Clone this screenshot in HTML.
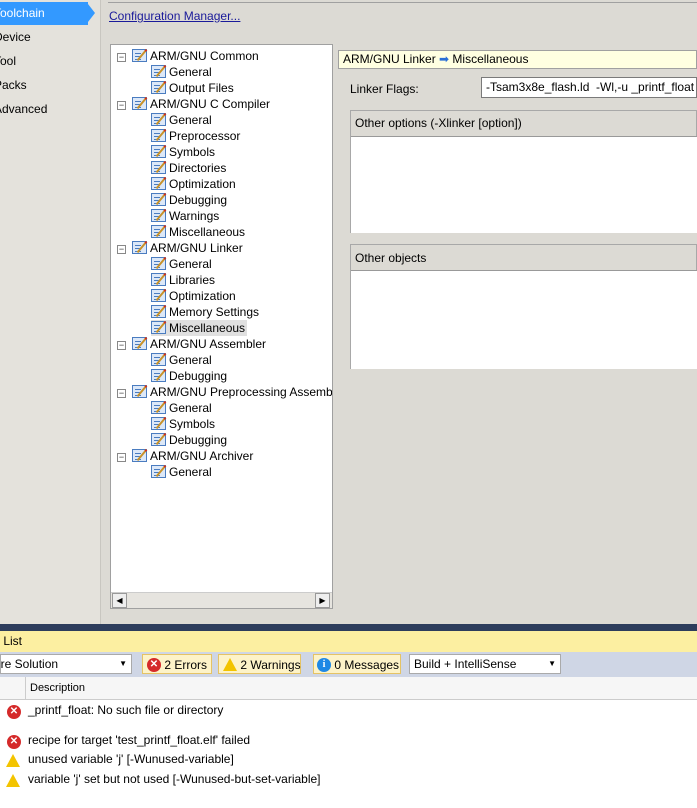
<!DOCTYPE html>
<html><head><style>
*{margin:0;padding:0;box-sizing:border-box}
body{width:697px;height:808px;overflow:hidden;background:#dcdad4;font-family:"Liberation Sans",Arial,sans-serif;font-size:12px;color:#000;position:relative}
.a{position:absolute;white-space:nowrap}
.side div{position:absolute;left:-6px;height:23px;line-height:23px;font-size:12px}
.tree .r{position:absolute;height:16px;line-height:16px;font-size:12px;white-space:nowrap}
.box{position:absolute;width:9px;height:9px;border:1px solid #888;background:#fff;font-size:9px;line-height:6px;text-align:center;color:#333}
.ic{display:inline-block;width:15px;height:13px;vertical-align:-2px;margin-right:3px;background:#dce8f8;border:1px solid #4a7cc0;position:relative}
.ic:before{content:"";position:absolute;left:2px;top:3px;width:6px;height:1px;background:#4a7cc0;box-shadow:0 3px 0 #4a7cc0,0 6px 0 #4a7cc0}
.ic:after{content:"";position:absolute;left:8px;top:-2px;width:2px;height:12px;background:#c8922a;border-top:2px solid #d03020;transform:rotate(40deg)}
.err{display:inline-block;width:14px;height:14px;border-radius:50%;background:#d52a2a;color:#fff;font-size:10px;line-height:14px;text-align:center;font-weight:bold}
.warn{display:inline-block;width:0;height:0;border-left:7px solid transparent;border-right:7px solid transparent;border-bottom:13px solid #f3c400;position:relative}
.btn{position:absolute;top:654px;height:20px;background:#fdf3c8;border:1px solid #e5c365;line-height:18px;white-space:nowrap;font-size:12px}
.btn span{vertical-align:middle}
</style></head><body>
<div class="a" style="left:0;top:0;width:100px;height:625px;background:#e4e2dc"></div>
<div class="a" style="left:100px;top:0;width:1px;height:625px;background:#c8c6c0"></div>
<div class="a" style="left:0;top:2px;width:88px;height:23px;background:#3399ff"></div>
<div class="a" style="left:88px;top:4px;width:0;height:0;border-top:9px solid transparent;border-bottom:9px solid transparent;border-left:7px solid #3399ff"></div>
<div class="side">
<div style="top:2px;color:#fff">Toolchain</div>
<div style="top:26px">Device</div>
<div style="top:50px">Tool</div>
<div style="top:74px">Packs</div>
<div style="top:98px">Advanced</div>
</div>
<div class="a" style="left:108px;top:2px;width:589px;height:1px;background:#a0a0a0"></div>
<div class="a" style="left:109px;top:9px;color:#1a1a9a;text-decoration:underline;font-size:12px">Configuration Manager...</div>

<div class="a" style="left:110px;top:44px;width:223px;height:565px;background:#fff;border:1px solid #a0a0a0"></div>
<div class="a tree" style="left:110px;top:44px;width:222px;height:565px;overflow:hidden">
<div class="box" style="left:7px;top:9px">−</div><div class="r" style="left:22px;top:4px"><span class="ic"></span>ARM/GNU Common</div>
<div class="r" style="left:41px;top:20px"><span class="ic"></span>General</div>
<div class="r" style="left:41px;top:36px"><span class="ic"></span>Output Files</div>
<div class="box" style="left:7px;top:57px">−</div><div class="r" style="left:22px;top:52px"><span class="ic"></span>ARM/GNU C Compiler</div>
<div class="r" style="left:41px;top:68px"><span class="ic"></span>General</div>
<div class="r" style="left:41px;top:84px"><span class="ic"></span>Preprocessor</div>
<div class="r" style="left:41px;top:100px"><span class="ic"></span>Symbols</div>
<div class="r" style="left:41px;top:116px"><span class="ic"></span>Directories</div>
<div class="r" style="left:41px;top:132px"><span class="ic"></span>Optimization</div>
<div class="r" style="left:41px;top:148px"><span class="ic"></span>Debugging</div>
<div class="r" style="left:41px;top:164px"><span class="ic"></span>Warnings</div>
<div class="r" style="left:41px;top:180px"><span class="ic"></span>Miscellaneous</div>
<div class="box" style="left:7px;top:201px">−</div><div class="r" style="left:22px;top:196px"><span class="ic"></span>ARM/GNU Linker</div>
<div class="r" style="left:41px;top:212px"><span class="ic"></span>General</div>
<div class="r" style="left:41px;top:228px"><span class="ic"></span>Libraries</div>
<div class="r" style="left:41px;top:244px"><span class="ic"></span>Optimization</div>
<div class="r" style="left:41px;top:260px"><span class="ic"></span>Memory Settings</div>
<div class="r" style="left:41px;top:276px;background:#e0e0e0;padding-right:2px"><span class="ic"></span>Miscellaneous</div>
<div class="box" style="left:7px;top:297px">−</div><div class="r" style="left:22px;top:292px"><span class="ic"></span>ARM/GNU Assembler</div>
<div class="r" style="left:41px;top:308px"><span class="ic"></span>General</div>
<div class="r" style="left:41px;top:324px"><span class="ic"></span>Debugging</div>
<div class="box" style="left:7px;top:345px">−</div><div class="r" style="left:22px;top:340px"><span class="ic"></span>ARM/GNU Preprocessing Assembler</div>
<div class="r" style="left:41px;top:356px"><span class="ic"></span>General</div>
<div class="r" style="left:41px;top:372px"><span class="ic"></span>Symbols</div>
<div class="r" style="left:41px;top:388px"><span class="ic"></span>Debugging</div>
<div class="box" style="left:7px;top:409px">−</div><div class="r" style="left:22px;top:404px"><span class="ic"></span>ARM/GNU Archiver</div>
<div class="r" style="left:41px;top:420px"><span class="ic"></span>General</div>
<div class="a" style="left:1px;top:548px;width:221px;height:16px;background:#e6e4df;border-top:1px solid #ccc"></div>
<div class="a" style="left:2px;top:549px;width:15px;height:15px;background:#eee;border:1px solid #999;font-size:8px;text-align:center;line-height:13px">◀</div>
<div class="a" style="left:205px;top:549px;width:15px;height:15px;background:#eee;border:1px solid #999;font-size:8px;text-align:center;line-height:13px">▶</div>
</div>

<div class="a" style="left:338px;top:50px;width:359px;height:19px;background:#ffffe1;border:1px solid #a0a0a0;line-height:17px;padding-left:4px">ARM/GNU Linker <span style="color:#2a6fd6">➡</span> Miscellaneous</div>
<div class="a" style="left:350px;top:82px">Linker Flags:</div>
<div class="a" style="left:481px;top:77px;width:216px;height:21px;background:#fff;border:1px solid #7a7a7a;line-height:19px;padding-left:4px;overflow:hidden">-Tsam3x8e_flash.ld &nbsp;-Wl,-u _printf_float</div>
<div class="a" style="left:350px;top:110px;width:347px;height:123px;border:1px solid #a8a8a8;background:#dcdad4">
<div class="a" style="left:4px;top:5px">Other options (-Xlinker [option])</div>
<div class="a" style="left:0;top:25px;width:347px;height:97px;background:#fff;border-top:1px solid #999"></div></div>
<div class="a" style="left:350px;top:244px;width:347px;height:125px;border:1px solid #a8a8a8;background:#dcdad4">
<div class="a" style="left:4px;top:6px">Other objects</div>
<div class="a" style="left:0;top:25px;width:347px;height:99px;background:#fff;border-top:1px solid #999"></div></div>

<div class="a" style="left:0;top:624px;width:697px;height:7px;background:#2d3d5c"></div>
<div class="a" style="left:0;top:631px;width:697px;height:21px;background:#fcefa1;line-height:21px"><span style="margin-left:-4px">r List</span></div>
<div class="a" style="left:0;top:652px;width:697px;height:25px;background:#cfd6e5"></div>
<div class="a" style="left:0;top:654px;width:132px;height:20px;background:#fff;border:1px solid #aaa;line-height:18px"><span style="margin-left:-3px">ire Solution</span><span style="position:absolute;right:4px;font-size:8px">▼</span></div>
<div class="btn" style="left:142px;width:70px;padding-left:4px"><span class="err">✕</span> <span>2 Errors</span></div>
<div class="btn" style="left:218px;width:83px;padding-left:4px"><span class="warn"></span> <span>2 Warnings</span></div>
<div class="btn" style="left:313px;width:88px;padding-left:3px"><span class="err" style="background:#1e88e5;font-family:'Liberation Serif'">i</span> <span>0 Messages</span></div>
<div class="a" style="left:409px;top:654px;width:152px;height:20px;background:#fff;border:1px solid #aaa;line-height:18px;padding-left:4px">Build + IntelliSense<span style="position:absolute;right:4px;font-size:8px">▼</span></div>
<div class="a" style="left:0;top:677px;width:697px;height:131px;background:#fff"></div>
<div class="a" style="left:0;top:677px;width:697px;height:23px;background:#f6f6f6;border-bottom:1px solid #ccc"></div>
<div class="a" style="left:25px;top:677px;width:1px;height:23px;background:#ccc"></div>
<div class="a" style="left:30px;top:682px;font-size:11px">Description</div>
<div class="a" style="left:7px;top:703px"><span class="err">✕</span></div><div class="a" style="left:28px;top:703px">_printf_float: No such file or directory</div>
<div class="a" style="left:7px;top:733px"><span class="err">✕</span></div><div class="a" style="left:28px;top:733px">recipe for target 'test_printf_float.elf' failed</div>
<div class="a" style="left:6px;top:754px"><span class="warn"></span></div><div class="a" style="left:28px;top:752px">unused variable 'j' [-Wunused-variable]</div>
<div class="a" style="left:6px;top:774px"><span class="warn"></span></div><div class="a" style="left:28px;top:772px">variable 'j' set but not used [-Wunused-but-set-variable]</div>
</body></html>
